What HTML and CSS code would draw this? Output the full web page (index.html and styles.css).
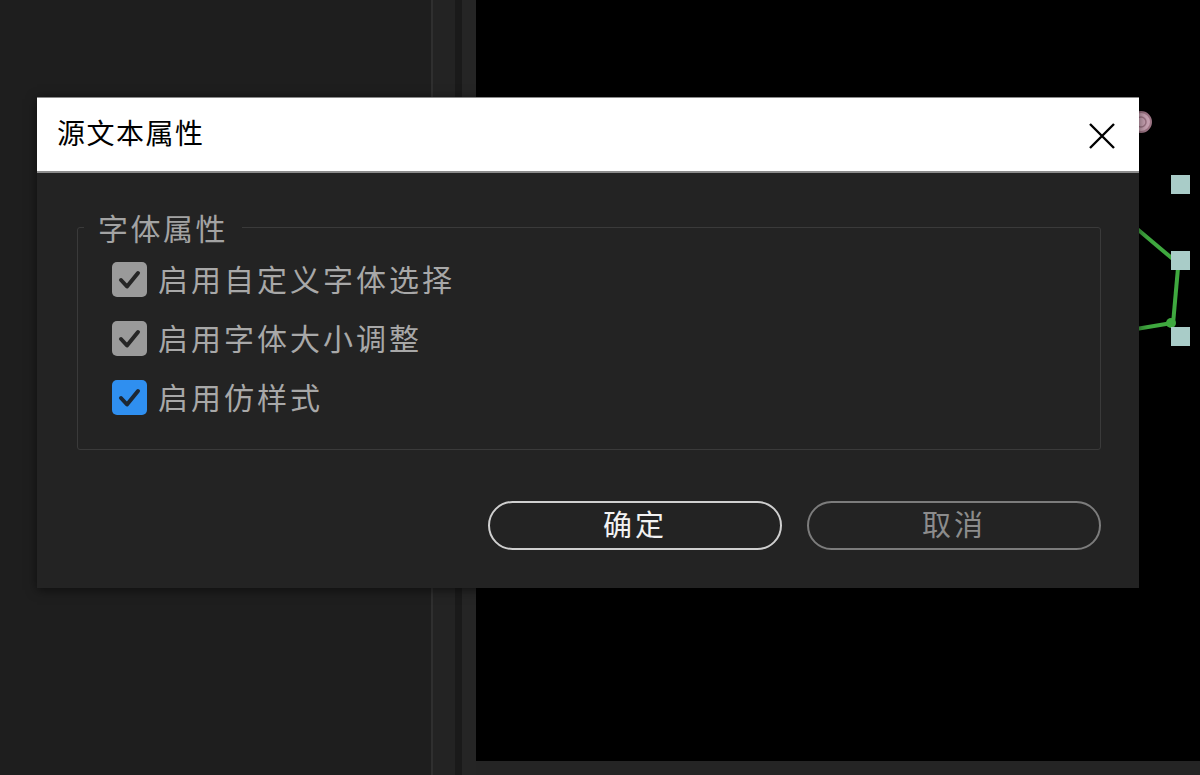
FILE: index.html
```html
<!DOCTYPE html>
<html lang="zh-CN">
<head>
<meta charset="utf-8">
<title>源文本属性</title>
<link rel="stylesheet" href="styles.css">
</head>
<body>
<div class="workspace">
  <div class="left-panel"></div>
  <div class="split-line"></div>
  <div class="split-a"></div>
  <div class="split-b"></div>
  <div class="frame"></div>
  <div class="viewer">
    <div class="canvas">
      <svg class="diagram" viewBox="476 0 724 761" width="724" height="761">
        <circle cx="1141" cy="122" r="10" fill="#c9a3b3" stroke="#9c7484" stroke-width="2"/>
        <circle cx="1141" cy="122" r="5" fill="none" stroke="#9c7484" stroke-width="1.5"/>
        <line x1="1136" y1="228" x2="1174" y2="260" stroke="#3fa83f" stroke-width="4"/>
        <line x1="1178" y1="268" x2="1173" y2="324" stroke="#3fa83f" stroke-width="4"/>
        <line x1="1136" y1="329" x2="1172" y2="323" stroke="#3fa83f" stroke-width="4"/>
        <circle cx="1171" cy="323" r="5" fill="#3fa83f"/>
        <rect x="1171" y="175" width="19" height="19" fill="#a9ccc8"/>
        <rect x="1171" y="251" width="19" height="19" fill="#a9ccc8"/>
        <rect x="1171" y="327" width="19" height="19" fill="#a9ccc8"/>
      </svg>
    </div>
    <div class="timeline-strip"></div>
  </div>
</div>

<div class="dialog">
  <div class="dialog-title">
    <span class="title-text">源文本属性</span>
    <svg class="close" width="26" height="26" viewBox="0 0 26 26">
      <path d="M1 1 L25 25 M25 1 L1 25" stroke="#000" stroke-width="2.4" fill="none"/>
    </svg>
  </div>
  <div class="dialog-body">
    <fieldset class="group">
      <legend class="group-label">字体属性</legend>
      <div class="row">
        <span class="box">
          <svg width="35" height="35" viewBox="0 0 35 35"><path d="M9 18 L15 24.5 L26 11" stroke="#262626" stroke-width="4" fill="none" stroke-linecap="round" stroke-linejoin="round"/></svg>
        </span>
        <span class="label">启用自定义字体选择</span>
      </div>
      <div class="row">
        <span class="box">
          <svg width="35" height="35" viewBox="0 0 35 35"><path d="M9 18 L15 24.5 L26 11" stroke="#262626" stroke-width="4" fill="none" stroke-linecap="round" stroke-linejoin="round"/></svg>
        </span>
        <span class="label">启用字体大小调整</span>
      </div>
      <div class="row">
        <span class="box box-on">
          <svg width="35" height="35" viewBox="0 0 35 35"><path d="M9 18 L15 24.5 L26 11" stroke="#1d2733" stroke-width="4" fill="none" stroke-linecap="round" stroke-linejoin="round"/></svg>
        </span>
        <span class="label">启用仿样式</span>
      </div>
    </fieldset>
    <div class="buttons">
      <button class="btn btn-ok">确定</button>
      <button class="btn btn-cancel">取消</button>
    </div>
  </div>
</div>
</body>
</html>
```

FILE: styles.css
```css
html, body {
  margin: 0;
  padding: 0;
  width: 1200px;
  height: 775px;
  overflow: hidden;
  background: #1e1e1e;
  font-family: "Noto Sans CJK SC", "Noto Sans", sans-serif;
}

.workspace {
  display: flex;
  width: 1200px;
  height: 775px;
}

.left-panel {
  width: 431px;
  background: #1e1e1e;
}

.split-line {
  width: 2px;
  background: #2f2f2f;
}

.split-a {
  width: 22px;
  background: #232323;
}

.split-b {
  width: 7px;
  background: #1a1a1a;
}

.frame {
  width: 14px;
  background: #252525;
}

.viewer {
  flex: 1;
  display: flex;
  flex-direction: column;
}

.canvas {
  height: 761px;
  background: #000;
  position: relative;
}

.diagram {
  display: block;
}

.timeline-strip {
  flex: 1;
  background: #242424;
}

.dialog {
  position: absolute;
  left: 37px;
  top: 97px;
  width: 1102px;
  box-shadow: 0 2px 10px rgba(0, 0, 0, 0.55);
}

.dialog-title {
  height: 76px;
  background: #fff;
  border-top: 1px solid #8a8a8a;
  border-bottom: 2px solid #8c8c8c;
  display: flex;
  align-items: center;
  justify-content: space-between;
  padding: 0 24px 0 20px;
  box-sizing: border-box;
}

.title-text {
  font-size: 28px;
  letter-spacing: 1.5px;
  color: #000;
  line-height: 34px;
  padding-bottom: 5px;
}

.close {
  display: block;
  margin-top: 2px;
}

.dialog-body {
  background: #232323;
  padding: 37px 38px 38px 40px;
}

.group {
  margin: 0;
  border: 1px solid #3a3a3a;
  border-radius: 3px;
  padding: 6px 0 22px 34px;
}

.group-label {
  padding: 0 14px;
  margin-left: -28px;
  font-size: 30px;
  letter-spacing: 2.5px;
  line-height: 34px;
  color: #a3a3a3;
}

.row {
  height: 59px;
  display: flex;
  align-items: center;
}

.box {
  width: 35px;
  height: 35px;
  border-radius: 5px;
  background: #9a9a9a;
  display: block;
  flex: none;
}

.box svg {
  display: block;
}

.box-on {
  background: #2f8ff0;
}

.label {
  margin-left: 11px;
  font-size: 30px;
  letter-spacing: 3px;
  line-height: 34px;
  padding-bottom: 4px;
  color: #a8a8a8;
}

.buttons {
  display: flex;
  justify-content: flex-end;
  gap: 25px;
  margin-top: 51px;
}

.btn {
  width: 294px;
  height: 49px;
  border-radius: 25px;
  background: #232323;
  font-family: "Noto Sans CJK SC", "Noto Sans", sans-serif;
  font-size: 29px;
  letter-spacing: 3px;
  line-height: 40px;
  padding: 0 0 5px 0;
  box-sizing: border-box;
}

.btn-ok {
  border: 2px solid #cfcfcf;
  color: #f2f2f2;
}

.btn-cancel {
  border: 2px solid #7c7c7c;
  color: #8c8c8c;
}
```
